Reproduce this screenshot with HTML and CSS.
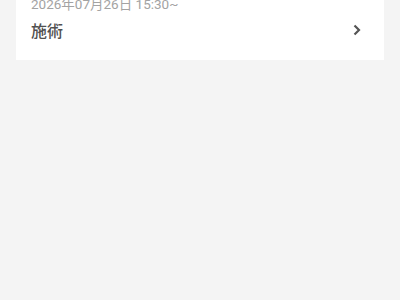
FILE: index.html
```html
<!DOCTYPE html>
<html lang="ja">
<head>
<meta charset="utf-8">
<link rel="stylesheet" href="styles.css">
</head>
<body>
<div class="card">
  <div class="date">2026年07月26日 15:30~</div>
  <div class="row">
    <span class="title">施術</span>
    <svg class="chev" width="10" height="12" viewBox="0 0 10 12"><path d="M2.5 1.5 L7 6 L2.5 10.5" fill="none" stroke="#555" stroke-width="2.2"/></svg>
  </div>
</div>
</body>
</html>
```
FILE: styles.css
```css
html, body { margin: 0; padding: 0; }
body {
  background: #f4f4f4;
  font-family: "Noto Sans CJK JP", "Noto Sans", sans-serif;
  width: 400px;
  height: 300px;
  overflow: hidden;
}
.card {
  margin: -6px 16px 0 16px;
  background: #fff;
  padding: 0 22px 19px 15px;
}
.date {
  font-family: Roboto, "Noto Sans CJK JP", sans-serif;
  font-size: 13.5px;
  line-height: 20px;
  color: #a3a3a3;
}
.row {
  display: flex;
  justify-content: space-between;
  align-items: center;
  margin-top: 5px;
}
.title {
  font-size: 16px;
  line-height: 22px;
  font-weight: 500;
  color: #505050;
}
.chev { display: block; }
```
